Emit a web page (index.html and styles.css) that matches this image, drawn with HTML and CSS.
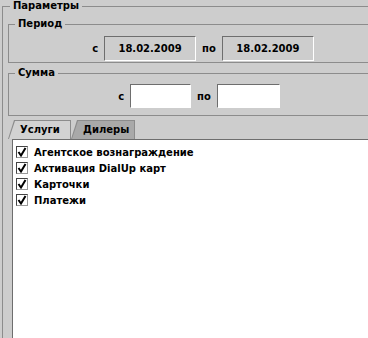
FILE: index.html
```html
<!DOCTYPE html>
<html>
<head>
    <title>Параметры</title>
    <meta charset="UTF-8">
    <link rel="stylesheet" href="styles.css">
</head>
<body>
    <div class="page">
        <fieldset class="params">
            <legend>Параметры</legend>

            <fieldset class="group period">
                <legend>Период</legend>
                <div class="range">
                    <span class="label">с</span>
                    <div class="date-box">18.02.2009</div>
                    <span class="label">по</span>
                    <div class="date-box">18.02.2009</div>
                </div>
            </fieldset>

            <fieldset class="group sum">
                <legend>Сумма</legend>
                <div class="range">
                    <span class="label">с</span>
                    <input type="text" class="num-input sum-from">
                    <span class="label">по</span>
                    <input type="text" class="num-input sum-to">
                </div>
            </fieldset>

            <div class="tabs">
                <div class="tab tab-active"><div class="tab-face">Услуги</div></div>
                <div class="tab"><div class="tab-face">Дилеры</div></div>
            </div>
            <div class="tab-panel">
                <ul class="check-list">
                    <li><span class="check"><svg width="10" height="10" viewBox="0 0 10 10"><polyline points="1.5,5 4,8.5 8.5,1" fill="none" stroke="#000" stroke-width="2"/></svg></span>Агентское вознаграждение</li>
                    <li><span class="check"><svg width="10" height="10" viewBox="0 0 10 10"><polyline points="1.5,5 4,8.5 8.5,1" fill="none" stroke="#000" stroke-width="2"/></svg></span>Активация DialUp карт</li>
                    <li><span class="check"><svg width="10" height="10" viewBox="0 0 10 10"><polyline points="1.5,5 4,8.5 8.5,1" fill="none" stroke="#000" stroke-width="2"/></svg></span>Карточки</li>
                    <li><span class="check"><svg width="10" height="10" viewBox="0 0 10 10"><polyline points="1.5,5 4,8.5 8.5,1" fill="none" stroke="#000" stroke-width="2"/></svg></span>Платежи</li>
                </ul>
            </div>
        </fieldset>
    </div>
</body>
</html>
```
FILE: styles.css
```css
* { margin: 0; padding: 0; box-sizing: border-box; }
html, body { width: 368px; height: 338px; overflow: hidden; }
body { background: #cdcdcd; font: bold 10px 'DejaVu Sans', sans-serif; color: #000; }
.page { width: 394px; }

fieldset { border: 1px solid #8c8c8c; min-width: 0; }
legend { padding: 0 3px; line-height: 12px; }

.params { margin-left: 2px; padding: 0 0 0 5px; border-right: none; border-bottom: none; height: 400px; }
.params > legend { margin-left: 2px; }

.group { margin-top: 6px; padding: 0; }
.group legend { margin-left: 6px; }
.period { padding: 6px 0 1px; }
.period .range { padding-left: 4px; }
.sum { margin-top: 4px; padding: 5px 0 7px; }
.sum .range { padding-right: 4px; }

.range { display: flex; justify-content: center; align-items: center; gap: 6px; }
.date-box { width: 92px; height: 25px; line-height: 23px; text-align: center; border: 1px solid; border-color: #6e6e6e #fff #fff #6e6e6e; background: #cdcdcd; }
.num-input { height: 24px; background: #fff; border: 1px solid; border-color: #6e6e6e #fff #fff #6e6e6e; outline: none; }
.sum-from { width: 61px; }
.sum-to { width: 63px; }

.tabs { display: flex; margin-top: 4px; height: 19px; }
.tab { background: #8c8c8c; clip-path: polygon(6px 0, 100% 0, 100% 100%, 0 100%); padding: 1px 1px 0 1px; }
.tab-face { height: 100%; background: #a9a9a9; clip-path: polygon(6px 0, 100% 0, 100% 100%, 0 100%); padding: 3px 10px 0 11px; }
.tab-active { width: 63px; }
.tab-active .tab-face { background: #d2d2d2; }
.tab + .tab { width: 64px; }

.tab-panel { margin-left: 4px; border-left: 1px solid #6e6e6e; border-top: 1px solid #6e6e6e; background: #fff; height: 300px; }
.check-list { list-style: none; padding: 4px 0 0 3px; }
.check-list li { height: 16px; display: flex; align-items: center; gap: 6px; }
.check { width: 12px; height: 12px; border: 1px solid; border-color: #444 #999 #999 #444; background: #fff; display: flex; align-items: center; justify-content: center; }
.check svg { display: block; }
```
